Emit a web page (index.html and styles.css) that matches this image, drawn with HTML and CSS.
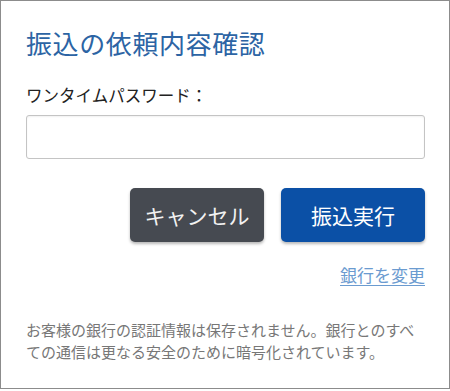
FILE: index.html
```html
<!DOCTYPE html>
<html lang="ja">
<head>
<meta charset="utf-8">
<link rel="stylesheet" href="styles.css">
</head>
<body>
<div class="card">
  <h1 class="title">振込の依頼内容確認</h1>
  <label class="label" for="otp">ワンタイムパスワード：</label>
  <input class="input" id="otp" type="text">
  <div class="actions">
    <button class="btn btn-cancel">キャンセル</button>
    <button class="btn btn-exec">振込実行</button>
  </div>
  <div class="link-row"><a class="link" href="#">銀行を変更</a></div>
  <p class="note">お客様の銀行の認証情報は保存されません。銀行とのすべての通信は更なる安全のために暗号化されています。</p>
</div>
</body>
</html>
```
FILE: styles.css
```css
html, body {
  margin: 0;
  padding: 0;
  background: #ffffff;
}
body {
  font-family: "Noto Sans CJK JP", "Noto Sans", sans-serif;
}
.card {
  box-sizing: border-box;
  width: 450px;
  height: 389px;
  border: 1px solid #8c8c8c;
  padding: 26px 24px 0 25px;
  display: flex;
  flex-direction: column;
}
.title {
  margin: 0;
  font-size: 26px;
  line-height: 32px;
  font-weight: 400;
  color: #2c64a4;
  letter-spacing: 0.6px;
}
.label {
  display: block;
  margin-top: 24px;
  font-size: 16.5px;
  line-height: 24px;
  color: #222222;
  letter-spacing: 0;
}
.input {
  box-sizing: border-box;
  margin: 8px 0 0 0;
  width: 100%;
  height: 44px;
  border: 1px solid #c4c4c4;
  border-radius: 3px;
  box-shadow: inset 0 1px 2px rgba(0,0,0,0.06);
  background: #fff;
  padding: 0 10px;
  font-size: 17px;
  font-family: inherit;
}
.actions {
  margin-top: 29px;
  display: flex;
  justify-content: flex-end;
  gap: 17px;
}
.btn {
  height: 54px;
  border: none;
  border-radius: 5px;
  color: #ffffff;
  font-family: inherit;
  font-size: 21px;
  padding: 0;
  box-shadow: 0 2px 3px rgba(0,0,0,0.28);
}
.btn-cancel {
  width: 134px;
  background: #464a51;
  color: #f2f2f2;
}
.btn-exec {
  width: 144px;
  background: #0b50a6;
}
.link-row {
  margin-top: 21px;
  display: flex;
  justify-content: flex-end;
}
.link {
  font-size: 17px;
  line-height: 24px;
  color: #6b9bd0;
  text-decoration: underline;
  text-underline-offset: 3px;
}
.note {
  margin: 32px 0 0 0;
  font-size: 15px;
  line-height: 22px;
  color: #777777;
}
```
